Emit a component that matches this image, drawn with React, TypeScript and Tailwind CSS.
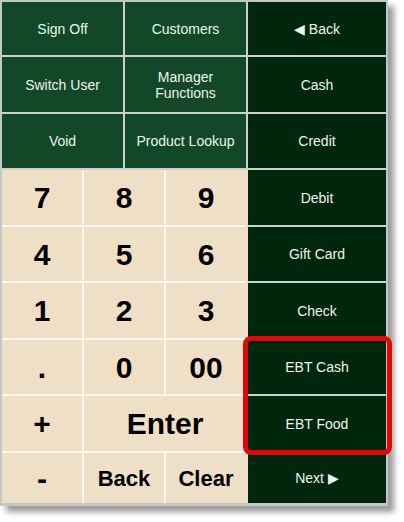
import React from "react";

const font = { fontFamily: '"Liberation Sans", Arial, sans-serif' };

const topKeys = [
  ["Sign Off", "Customers"],
  ["Switch User", "Manager\nFunctions"],
  ["Void", "Product Lookup"],
];

const padKeys = ["7", "8", "9", "4", "5", "6", "1", "2", "3", ".", "0", "00"];

const tenderKeys = [
  "◀ Back",
  "Cash",
  "Credit",
  "Debit",
  "Gift Card",
  "Check",
  "EBT Cash",
  "EBT Food",
  "Next ▶",
];

const GreenKey: React.FC<{ label: string; dark?: boolean }> = ({ label, dark }) => (
  <div
    className={`flex items-center justify-center text-center text-[14px] leading-[16px] whitespace-pre-line text-[#eef4ee] ${
      dark ? "bg-[#00260b]" : "bg-[#124827]"
    }`}
  >
    {label}
  </div>
);

const PadKey: React.FC<{ label: string; className?: string }> = ({ label, className }) => (
  <div
    className={`flex items-center justify-center bg-[#f0dfc7] font-bold text-black ${
      className ?? "text-[30px]"
    }`}
  >
    {label}
  </div>
);

export default function App() {
  return (
    <div className="w-[404px] h-[522px] bg-white" style={font}>
      <div className="relative w-[388px] h-[506px] bg-[#c6c6c6] pt-[2px] pb-[3px] px-[2px] shadow-[6px_6px_6px_rgba(0,0,0,0.4)]">
        <div className="flex h-full">
          <div className="w-[246px] flex flex-col">
            <div className="grid grid-cols-2 grid-rows-[53px_55px_54px] gap-[2px] bg-[#cbd0cb] pr-[2px] pb-[2px]">
              {topKeys.flat().map((k) => (
                <GreenKey key={k} label={k} />
              ))}
            </div>
            <div className="flex-1 bg-[#f0dfc7] pr-[2px]">
              <div className="h-full grid grid-cols-3 grid-rows-[55px_54px_55px_54px_55px_1fr] gap-[2px] bg-[#fdf8f1]">
                {padKeys.map((k) => (
                  <PadKey key={k} label={k} />
                ))}
                <PadKey label="+" />
                <PadKey label="Enter" className="col-span-2 text-[30px]" />
                <PadKey label="-" />
                <PadKey label="Back" className="text-[22px]" />
                <PadKey label="Clear" className="text-[22px]" />
              </div>
            </div>
          </div>
          <div className="flex-1 grid grid-rows-[53px_55px_54px_55px_54px_55px_54px_55px_1fr] gap-[2px] bg-[#cbd0cb]">
            {tenderKeys.map((k) => (
              <GreenKey key={k} label={k} dark />
            ))}
          </div>
        </div>
        <div className="absolute left-[243px] top-[336px] w-[149px] h-[119px] rounded-[8px] border-[5px] border-[#e30808]" />
      </div>
    </div>
  );
}
